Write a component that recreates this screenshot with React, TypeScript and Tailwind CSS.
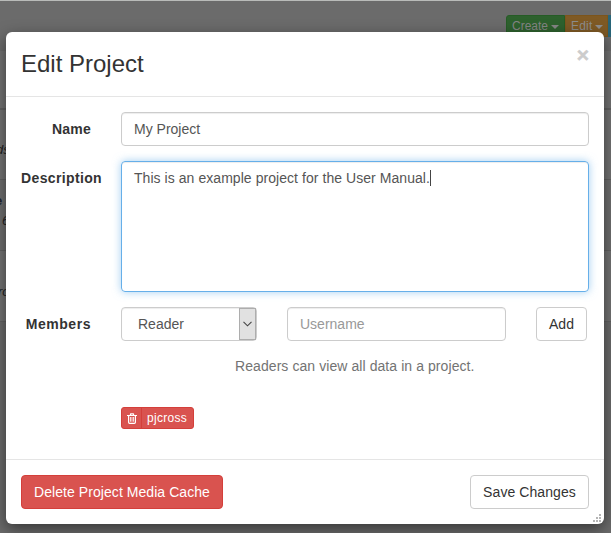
import React from "react";

const field =
  "rounded border border-[#ccc] bg-white px-3 text-[14px] leading-5 text-[#555] shadow-[inset_0_1px_1px_rgba(0,0,0,0.075)]";
const button = "h-[34px] rounded border px-3 text-[14px] leading-5";

function Caret() {
  return <span className="ml-[3px] inline-block border-x-4 border-t-4 border-x-transparent border-t-current align-middle" />;
}

function Page() {
  return (
    <div className="h-[533px] w-[611px] overflow-hidden bg-[#6b6b6b] text-[13px] text-[#222]">
      <div className="h-px bg-[#b9bbb9]" />
      <div className="flex h-[50px] pt-[14px] pl-[506px]">
        <div className="h-[22px] w-[59px] shrink-0 rounded-l-[3px] border border-[#265c26] bg-[#2e612e] pl-[5px] text-[12px] leading-5 whitespace-nowrap text-[#858585]">
          Create<Caret />
        </div>
        <div className="h-[22px] w-[43px] shrink-0 border border-[#7c551c] bg-[#7f5a25] pl-[5px] text-[12px] leading-5 tracking-[0.2px] whitespace-nowrap text-[#8d8d8d]">
          Edit<Caret />
        </div>
        <div className="h-[22px] w-[40px] shrink-0 bg-[#286578]" />
      </div>
      <div className="h-[57px] bg-[#737373]" />
      <div className="h-[71px] border-t-2 border-[#626262] bg-[#737373] pt-[30px] italic">
        <div className="-ml-[4px]">ds</div>
      </div>
      <div className="h-[71px] border-t border-[#626262] bg-[#6f6f6f] pt-[11px] leading-5">
        <div className="-ml-[5px] font-bold text-[#1d232d]">e</div>
        <div className="ml-[2px] italic">6</div>
      </div>
      <div className="h-[71px] border-t border-[#626262] bg-[#737373] pt-[31px] italic">
        <div className="-ml-[2px]">ro</div>
      </div>
      <div className="h-[220px] border-t border-[#626262] bg-[#6b6b6b]" />
    </div>
  );
}

function TrashIcon() {
  return (
    <svg width="10" height="11" viewBox="0 0 10 11" fill="none" stroke="currentColor">
      <path d="M0 2.5h10M3.2 2.5l.5-1.6h2.6l.5 1.6M1.6 2.5v6.8q0 1 1 1h4.8q1 0 1-1V2.5" strokeWidth="1.2" />
      <path d="M3.5 4v4.7M5 4v4.7M6.5 4v4.7" strokeWidth=".8" />
    </svg>
  );
}

function ResizeGrip() {
  return (
    <svg className="absolute right-[3px] bottom-[2px]" width="8" height="8" fill="#b5b5b5" shapeRendering="crispEdges">
      <path d="M6 0h2v2H6zM3 3h2v2H3zM6 3h2v2H6zM0 6h2v2H0zM3 6h2v2H3zM6 6h2v2H6z" />
    </svg>
  );
}

export default function App() {
  return (
    <div className="relative h-[533px] w-[611px] overflow-hidden font-['Liberation_Sans',Arial,sans-serif]">
      <Page />
      <div
        role="dialog"
        className="absolute top-[32px] left-[6px] flex h-[492px] w-[598px] flex-col rounded-[6px] bg-white text-[14px] leading-5 text-[#333] shadow-[0_5px_15px_rgba(0,0,0,0.5)]"
      >
        <header className="flex h-[65px] shrink-0 justify-between border-b border-[#e5e5e5] px-[15px] pt-[15px]">
          <h4 className="text-[24px] leading-[34px] font-normal">Edit Project</h4>
          <button aria-label="Close" className="-mt-[3px] h-[21px] text-[21px] leading-[17px] font-bold text-[#ccc] [-webkit-text-stroke:0.5px_#ccc]">
            ×
          </button>
        </header>

        <main className="flex grow flex-col px-[15px] pt-[15px]">
          <div className="flex">
            <label className="w-[70px] pt-[7px] text-right font-bold tracking-[0.2px]">Name</label>
            <input className={`${field} ml-[30px] h-[34px] w-[468px]`} defaultValue="My Project" />
          </div>
          <div className="mt-[15px] flex">
            <label className="w-[81px] pt-[7px] text-right font-bold tracking-[0.36px]">Description</label>
            <div className="ml-[19px] h-[131px] w-[468px] rounded border border-[#66afe9] px-3 py-[6px] tracking-[0.055px] text-[#555] shadow-[inset_0_1px_1px_rgba(0,0,0,0.075),0_0_8px_rgba(102,175,233,0.6)]">
              This is an example project for the User Manual.
              <span className="inline-block h-4 w-px bg-[#444] align-[-3px]" />
            </div>
          </div>
          <div className="mt-[15px] flex">
            <label className="w-[70px] pt-[7px] text-right font-bold tracking-[0.55px]">Members</label>
            <div className="ml-[30px] flex h-[34px] w-[136px] justify-between rounded border border-[#ccc] pl-4 leading-8 text-[#555] shadow-[inset_0_1px_1px_rgba(0,0,0,0.075)]">
              Reader
              <span className="flex w-[17px] items-center justify-center border border-[#adadad] bg-[#e1e1e1]">
                <svg width="9" height="6" viewBox="0 0 9 6" fill="none" stroke="#444" strokeWidth="1.1">
                  <path d="m.5.8 4 4 4-4" />
                </svg>
              </span>
            </div>
            <input className={`${field} ml-[30px] h-[34px] w-[219px] placeholder:text-[#999]`} placeholder="Username" />
            <button className={`${button} ml-[30px] w-[51px] border-[#ccc]`}>Add</button>
          </div>
          <p className="mt-[15px] ml-[214px] tracking-[0.075px] text-[#737373]">Readers can view all data in a project.</p>
          <div className="mt-[31px] ml-[100px] flex h-[22px] w-[73px] rounded-[3px] border border-[#d43f3a] bg-[#d9534f] text-[12px] text-white">
            <span className="flex w-[20px] items-center justify-center border-r border-[#d43f3a]">
              <TrashIcon />
            </span>
            <span className="pl-[5px] leading-5 tracking-[0.3px]">pjcross</span>
          </div>
        </main>

        <footer className="flex h-[65px] shrink-0 justify-between border-t border-[#e5e5e5] px-[15px] pt-[15px]">
          <button className={`${button} w-[202px] border-[#d43f3a] bg-[#d9534f] tracking-[0.06px] whitespace-nowrap text-white`}>
            Delete Project Media Cache
          </button>
          <button className={`${button} w-[119px] border-[#ccc] tracking-[0.08px] whitespace-nowrap`}>Save Changes</button>
        </footer>
        <ResizeGrip />
      </div>
    </div>
  );
}
